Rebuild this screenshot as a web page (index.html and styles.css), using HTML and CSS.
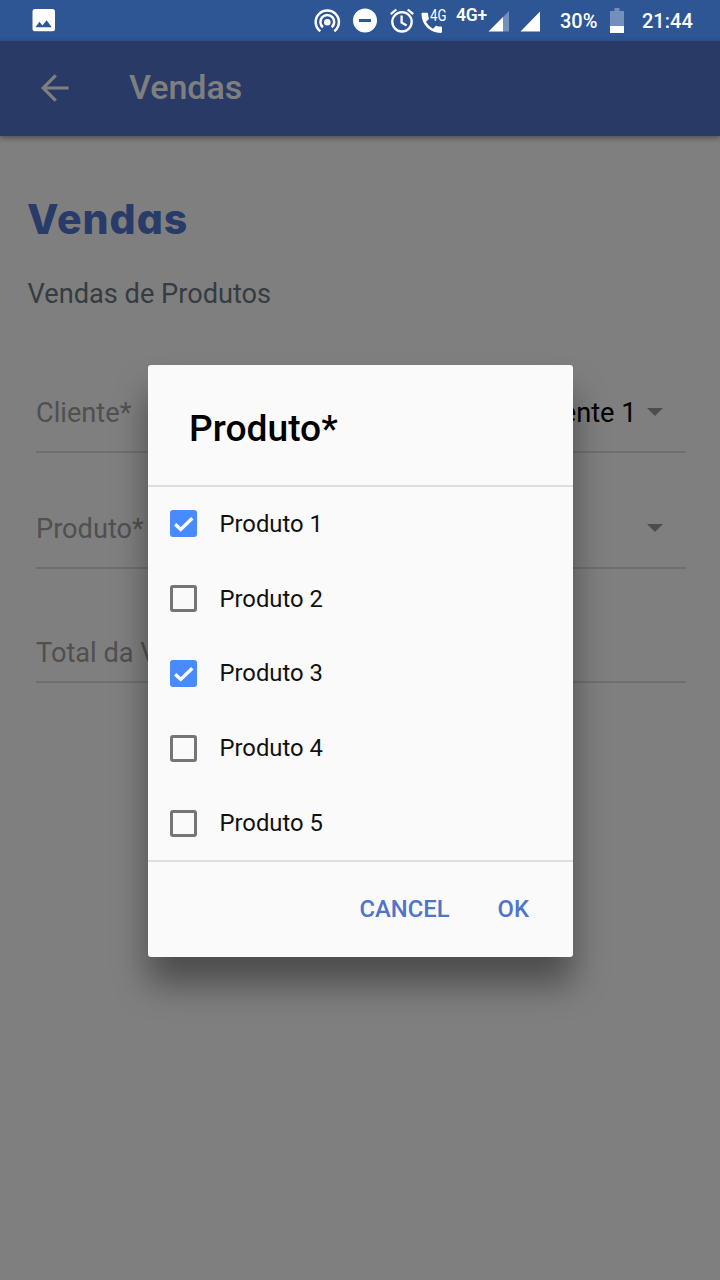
FILE: index.html
```html
<!DOCTYPE html>
<html lang="pt-BR">
<head>
<meta charset="utf-8">
<title>Vendas</title>
<link rel="stylesheet" href="styles.css">
</head>
<body>
<div class="screen">
  <div class="status">
    <svg class="status-icons" width="540" height="41" viewBox="0 0 540 41">
      <path fill="#fff" fill-rule="evenodd" d="M35 9h17.500a2.500 2.500 0 0 1 2.500 2.500v17.200a2.500 2.500 0 0 1-2.500 2.500h-17.500a2.500 2.500 0 0 1-2.500-2.500v-17.200a2.500 2.500 0 0 1 2.500-2.500zM35.500 27.200h16.300l-5.200-7-4.200 5.200-3-3.600z"/>
      <g fill="none" stroke="#fff" stroke-width="2.500">
        <path d="M320.300 31.300a11.600 11.600 0 1 1 14 0"/>
        <path d="M322.900 27.200a6.900 6.900 0 1 1 8.800 0"/>
      </g>
      <circle cx="327.300" cy="22.200" r="3.300" fill="#fff"/>
      <circle cx="365" cy="20.500" r="12" fill="#fff"/>
      <path d="M359 20.500h12" stroke="#2e5594" stroke-width="3"/>
      <g fill="none" stroke="#fff" stroke-width="2.300">
        <circle cx="402" cy="21.800" r="9.700"/>
        <path d="M401.600 15.500v7l5 3M390.800 14.200l5.500-4.700M413.200 14.200l-5.500-4.700"/>
      </g>
      <path fill="#fff" d="M422.500 12.800h4.400c.7 0 1.200.5 1.200 1.200 0 1.500.2 2.900.7 4.200.1.400 0 .9-.3 1.200l-2.500 2.400c1.700 3 4 5.300 7 6.900l2.400-2.500c.3-.3.800-.4 1.200-.3 1.400.5 2.800.7 4.200.7.700 0 1.200.5 1.200 1.200v4c0 .7-.5 1.200-1.200 1.200-10.700 0-19.300-8.400-19.300-19 0-.7.400-1.200 1-1.200z"/>
      <path fill="#7390bd" d="M509 11v20.500h-6V17z"/>
      <path fill="#fff" d="M503 17v14.500h-14.500z"/>
      <path fill="#fff" d="M520.500 31.500h20V11z"/>
    </svg>
    <span class="call-net">4G</span>
    <span class="data-net">4G+</span>
    <div class="status-right">
      <span class="percent">30%</span>
      <svg class="battery" width="14" height="25" viewBox="0 0 14 25"><path fill="#7390bd" d="M4.500 0h5v3H14v22H0V3h4.500z"/><path fill="#fff" d="M0 18h14v7H0z"/></svg>
      <span class="clock">21:44</span>
    </div>
  </div>
  <div class="app">
    <header class="toolbar">
      <svg width="28" height="28" viewBox="0 0 28 28"><path fill="none" stroke="#fff" stroke-width="3.200" d="M27.500 14H3M14.700 1.300L2.200 14l12.500 12.700"/></svg>
      <span class="toolbar-title">Vendas</span>
    </header>
    <main class="content">
      <h1 class="heading">Vendas</h1>
      <p class="subtitle">Vendas de Produtos</p>
      <div class="form">
        <div class="field"><span class="label">Cliente*</span><span class="value">Cliente 1</span><i class="caret"></i></div>
        <div class="field"><span class="label">Produto*</span><span class="value"></span><i class="caret"></i></div>
        <div class="field total"><span class="label">Total da Venda</span></div>
      </div>
    </main>
    <div class="backdrop">
      <section class="dialog">
        <h2 class="dialog-title">Produto*</h2>
        <div class="options">
          <div class="option"><span class="box checked"><svg width="28" height="28" viewBox="0 0 28 28"><path d="M5.200 14.200l5.500 5.300L22.300 8.200"/></svg></span><span>Produto 1</span></div>
          <div class="option"><span class="box"></span><span>Produto 2</span></div>
          <div class="option"><span class="box checked"><svg width="28" height="28" viewBox="0 0 28 28"><path d="M5.200 14.200l5.500 5.300L22.300 8.200"/></svg></span><span>Produto 3</span></div>
          <div class="option"><span class="box"></span><span>Produto 4</span></div>
          <div class="option"><span class="box"></span><span>Produto 5</span></div>
        </div>
        <div class="actions"><span class="cancel">CANCEL</span><span>OK</span></div>
      </section>
    </div>
  </div>
</div>
</body>
</html>
```
FILE: styles.css
```css
* { box-sizing: border-box; }
body { margin: 0; font-family: Roboto, sans-serif; }
svg { display: block; }
.screen { width: 720px; height: 1280px; overflow: hidden; }
.status { position: relative; height: 41px; background: #2e5594; color: #fff; }
.status-icons { position: absolute; left: 0; top: 0; }
.call-net, .data-net { position: absolute; line-height: 16px; white-space: nowrap; }
.call-net { left: 430px; top: 8px; font-size: 16.500px; transform: scaleX(.8); transform-origin: 0 0; }
.data-net { left: 456px; top: 7px; font-size: 17.500px; font-weight: 600; letter-spacing: -0.2px; }
.status-right { display: flex; align-items: center; height: 41px; padding-left: 541px; font-size: 20px; font-weight: 500; }
.percent { width: 69px; padding-left: 19px; }
.battery { margin-right: 18px; }

.app { position: relative; height: 1239px; background: #fff; }
.toolbar { position: relative; display: flex; align-items: center; height: 95px; padding: 0 0 2px 40.500px; background: #5074ca; box-shadow: 0 2px 6px rgba(0,0,0,.4); color: #fff; }
.toolbar-title { margin-left: 60.500px; padding-bottom: 2px; font-size: 34px; font-weight: 500; line-height: 40px; }
.content { padding: 59px 34px 0 28px; }
.heading { margin: 0 0 0 -1px; font-family: Inter, sans-serif; font-size: 41px; font-weight: 800; line-height: 49px; letter-spacing: 1px; color: #5077d2; font-feature-settings: "cv11"; }
.subtitle { margin: 34px 0 0 -0.500px; font-size: 27.200px; line-height: 32px; color: #6c7883; }
.form { padding: 64px 0 0 8px; }
.field { display: flex; align-items: center; height: 79px; padding-right: 23px; border-bottom: 2px solid #dedede; font-size: 27.200px; line-height: 32px; }
.field + .field { margin-top: 37px; }
.field + .field.total { height: 59px; margin-top: 55px; }
.label { color: #a0a0a0; white-space: nowrap; }
.value { margin-left: auto; color: #000; }
.caret { margin: 0 0 1px 10.500px; border: 8.500px solid transparent; border-top-color: #999; border-bottom: 0; }

.backdrop { position: absolute; inset: 0; display: flex; justify-content: center; align-items: flex-start; padding: 324px 0 0 1px; background: rgba(0,0,0,.5); }
.dialog { width: 425px; height: 592px; border-radius: 3px; background: #fafafa; box-shadow: 0 27px 34px rgba(0,0,0,.4); }
.dialog-title { margin: 0; height: 120px; padding: 41px 41px 0; font-size: 37.200px; font-weight: 500; line-height: 44px; }
.options { height: 377px; border-top: 2px solid #dedede; border-bottom: 2px solid #dedede; }
.option { display: flex; align-items: center; gap: 22.500px; height: 74.800px; padding: 0 0 1px 22px; font-size: 23.800px; line-height: 28px; color: #111; }
.box { width: 27px; height: 27px; border: 3px solid #757575; border-radius: 3px; }
.checked { border: 0; background: #488aff; }
.checked path { fill: none; stroke: #fff; stroke-width: 3.400; }
.actions { display: flex; justify-content: flex-end; gap: 48px; padding: 33px 44px 0 0; font-size: 23.800px; font-weight: 500; line-height: 28px; color: #5074ca; }
```
